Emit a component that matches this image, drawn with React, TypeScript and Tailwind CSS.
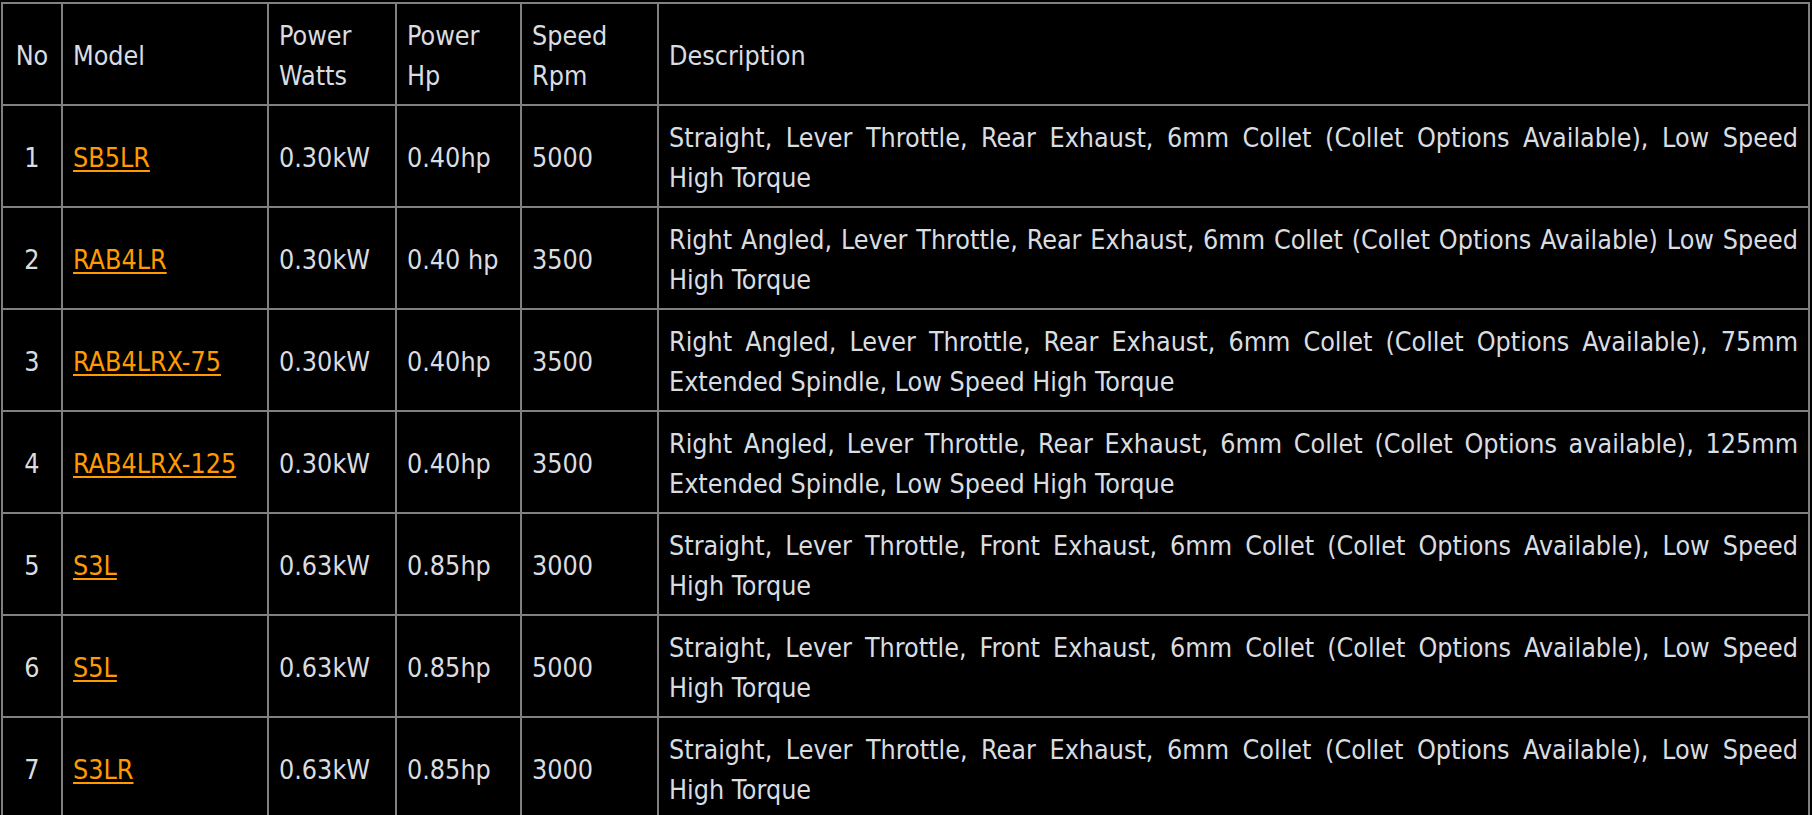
import React from "react";

type Row = { no: number; model: string; watts: string; hp: string; rpm: string; l1: string; l2: string };

const rows: Row[] = [
  { no: 1, model: "SB5LR", watts: "0.30kW", hp: "0.40hp", rpm: "5000", l1: "Straight, Lever Throttle, Rear Exhaust, 6mm Collet (Collet Options Available), Low Speed", l2: "High Torque" },
  { no: 2, model: "RAB4LR", watts: "0.30kW", hp: "0.40 hp", rpm: "3500", l1: "Right Angled, Lever Throttle, Rear Exhaust, 6mm Collet (Collet Options Available) Low Speed", l2: "High Torque" },
  { no: 3, model: "RAB4LRX-75", watts: "0.30kW", hp: "0.40hp", rpm: "3500", l1: "Right Angled, Lever Throttle, Rear Exhaust, 6mm Collet (Collet Options Available), 75mm", l2: "Extended Spindle, Low Speed High Torque" },
  { no: 4, model: "RAB4LRX-125", watts: "0.30kW", hp: "0.40hp", rpm: "3500", l1: "Right Angled, Lever Throttle, Rear Exhaust, 6mm Collet (Collet Options available), 125mm", l2: "Extended Spindle, Low Speed High Torque" },
  { no: 5, model: "S3L", watts: "0.63kW", hp: "0.85hp", rpm: "3000", l1: "Straight, Lever Throttle, Front Exhaust, 6mm Collet (Collet Options Available), Low Speed", l2: "High Torque" },
  { no: 6, model: "S5L", watts: "0.63kW", hp: "0.85hp", rpm: "5000", l1: "Straight, Lever Throttle, Front Exhaust, 6mm Collet (Collet Options Available), Low Speed", l2: "High Torque" },
  { no: 7, model: "S3LR", watts: "0.63kW", hp: "0.85hp", rpm: "3000", l1: "Straight, Lever Throttle, Rear Exhaust, 6mm Collet (Collet Options Available), Low Speed", l2: "High Torque" },
];

const cell = "border-2 border-[#808080] px-[10px] pt-[12px] pb-[8px] align-middle";

export default function App() {
  return (
    <div
      className="min-h-screen w-full bg-black pt-[2px] pl-px text-[#dadde0] text-[26.67px] leading-[1.5]"
      style={{ fontFamily: '"DejaVu Sans Condensed", "DejaVu Sans", sans-serif' }}
    >
      <table className="border-collapse table-fixed w-[1809px]">
        <colgroup>
          <col className="w-[60px]" />
          <col className="w-[206px]" />
          <col className="w-[128px]" />
          <col className="w-[125px]" />
          <col className="w-[137px]" />
          <col />
        </colgroup>
        <thead>
          <tr>
            <th className={`${cell} font-normal text-center px-[4px]`}>No</th>
            <th className={`${cell} font-normal text-left`}>Model</th>
            <th className={`${cell} font-normal text-left`}>Power<br />Watts</th>
            <th className={`${cell} font-normal text-left`}>Power<br />Hp</th>
            <th className={`${cell} font-normal text-left`}>Speed<br />Rpm</th>
            <th className={`${cell} font-normal text-left`}>Description</th>
          </tr>
        </thead>
        <tbody>
          {rows.map((r) => (
            <tr key={r.no}>
              <td className={`${cell} text-center px-[4px]`}>{r.no}</td>
              <td className={cell}>
                <a href="#" className="text-[#ff9a00] underline underline-offset-[3px]">{r.model}</a>
              </td>
              <td className={cell}>{r.watts}</td>
              <td className={cell}>{r.hp}</td>
              <td className={cell}>{r.rpm}</td>
              <td className={cell}>
                <div className="text-justify [text-align-last:justify] whitespace-nowrap">{r.l1}</div>
                <div className="text-left">{r.l2}</div>
              </td>
            </tr>
          ))}
        </tbody>
      </table>
    </div>
  );
}
